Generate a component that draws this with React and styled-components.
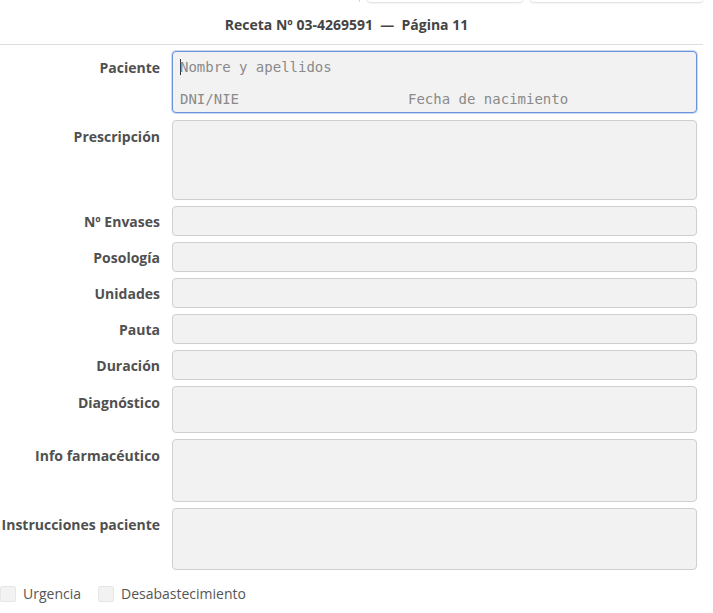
import styled, { createGlobalStyle } from "styled-components";

const Global = createGlobalStyle`
  html, body { margin: 0; padding: 0; background: #fff; }
  body { font-family: "Open Sans", "Noto Sans", sans-serif; color: #555; }
`;

const Page = styled.div`
  width: 703px;
`;

const Toolbar = styled.div`
  display: flex;
  align-items: flex-end;
  height: 30px;
  margin-top: -28px;
  padding-left: 359px;
  gap: 7px;
`;

const Divider = styled.div`
  width: 1px;
  height: 30px;
  background: #d6d6d6;
`;

const Tab = styled.div`
  width: ${({ w }) => w}px;
  height: 30px;
  background: #fff;
  border-radius: 0 0 4px 4px;
  box-shadow: 0 1px 2px rgba(0, 0, 0, 0.14);
`;

const Header = styled.div`
  height: 39px;
  padding-top: 3px;
  display: flex;
  align-items: center;
  justify-content: center;
  padding-right: 10px;
  border-bottom: 1px solid #dedede;
  font-size: 14px;
  font-weight: 700;
  color: #444;
`;

const Form = styled.div`
  display: grid;
  grid-template-columns: 160px 525px;
  column-gap: 12px;
  row-gap: 6px;
  padding-top: 6px;
`;

const Label = styled.div`
  text-align: right;
  font-size: 14px;
  font-weight: 700;
  line-height: 19px;
  padding-top: ${({ pt }) => pt ?? 7}px;
  white-space: nowrap;
  color: #505050;
`;

const Field = styled.div`
  height: ${({ h }) => h}px;
  box-sizing: border-box;
  background: #f2f2f2;
  border: 1px solid #cfcfcf;
  border-radius: 4px;
`;

const PatientBox = styled.div`
  height: 62px;
  margin-bottom: 1px;
  box-sizing: border-box;
  background: #f2f2f2;
  border: 1px solid #6b93db;
  box-shadow: 0 0 0 1px rgba(107, 147, 219, 0.35);
  border-radius: 4px;
  padding: 2px 7px 0;
  display: grid;
  grid-template-columns: 220px 1fr;
  grid-template-rows: 22px 32px;
  column-gap: 8px;
  font-family: "DejaVu Sans Mono", "Liberation Mono", monospace;
  font-size: 14px;
  color: #8a8a8a;
`;

const Placeholder = styled.div`
  grid-column: ${({ full }) => (full ? "1 / -1" : "auto")};
  align-self: end;
  line-height: 18px;
  white-space: nowrap;
`;

const Caret = styled.span`
  display: inline-block;
  width: 1px;
  height: 16px;
  background: #333;
  vertical-align: -3px;
  margin-right: -1px;
`;

const Checks = styled.div`
  display: flex;
  align-items: center;
  margin-top: 14px;
  font-size: 14px;
  color: #555;
`;

const Check = styled.label`
  display: flex;
  align-items: center;
  gap: 7px;
  margin-right: 17px;
`;

const Box = styled.span`
  width: 16px;
  height: 16px;
  box-sizing: border-box;
  background: #f2f2f2;
  border: 1px solid #e6e6e6;
  border-radius: 2px;
`;

const rows = [
  { label: "Prescripción", h: 80 },
  { label: "Nº Envases", h: 30, pt: 6 },
  { label: "Posología", h: 30, pt: 6 },
  { label: "Unidades", h: 30, pt: 6 },
  { label: "Pauta", h: 30, pt: 6 },
  { label: "Duración", h: 30, pt: 6 },
  { label: "Diagnóstico", h: 47 },
  { label: "Info farmacéutico", h: 63 },
  { label: "Instrucciones paciente", h: 62 },
];

export default function App() {
  return (
    <Page>
      <Global />
      <Toolbar>
        <Divider />
        <Tab w={162} />
        <Tab w={180} />
      </Toolbar>
      <Header>Receta Nº 03-4269591 &nbsp;—&nbsp; Página 11</Header>
      <Form>
        <Label>Paciente</Label>
        <PatientBox>
          <Placeholder full>
            <Caret />Nombre y apellidos
          </Placeholder>
          <Placeholder>DNI/NIE</Placeholder>
          <Placeholder>Fecha de nacimiento</Placeholder>
        </PatientBox>
        {rows.map((r) => [
          <Label key={r.label + "-l"} pt={r.pt}>
            {r.label}
          </Label>,
          <Field key={r.label + "-f"} h={r.h} />,
        ])}
      </Form>
      <Checks>
        <Check>
          <Box />
          Urgencia
        </Check>
        <Check>
          <Box />
          Desabastecimiento
        </Check>
      </Checks>
    </Page>
  );
}
